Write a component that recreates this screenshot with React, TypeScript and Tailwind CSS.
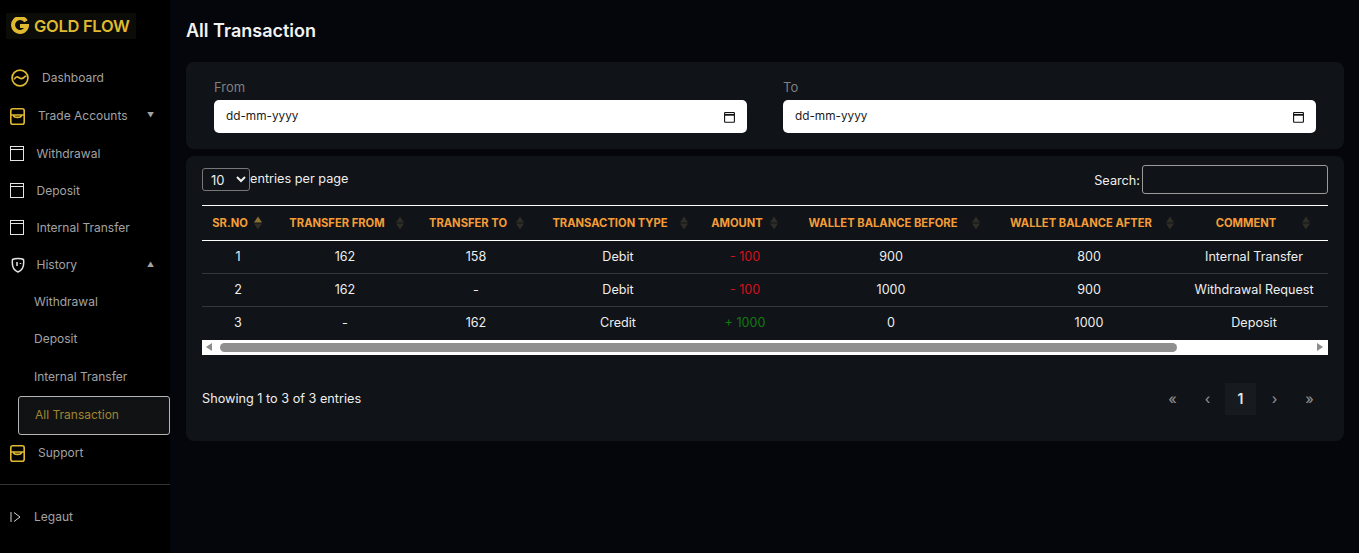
import { ReactNode } from "react";

const rows = [
  { sr: 1, from: "162", to: "158", type: "Debit", amount: "- 100", credit: false, before: "900", after: "800", comment: "Internal Transfer" },
  { sr: 2, from: "162", to: "-", type: "Debit", amount: "- 100", credit: false, before: "1000", after: "900", comment: "Withdrawal Request" },
  { sr: 3, from: "-", to: "162", type: "Credit", amount: "+ 1000", credit: true, before: "0", after: "1000", comment: "Deposit" },
];

const columns = [
  { label: "SR.NO", width: "w-[72px]", active: true },
  { label: "TRANSFER FROM", width: "w-[142px]" },
  { label: "TRANSFER TO", width: "w-[120px]" },
  { label: "TRANSACTION TYPE", width: "w-[164px]" },
  { label: "AMOUNT", width: "w-[90px]" },
  { label: "WALLET BALANCE BEFORE", width: "w-[202px]" },
  { label: "WALLET BALANCE AFTER", width: "w-[194px]" },
  { label: "COMMENT", width: "w-[136px]" },
];

function GoldBox() {
  return (
    <svg width="15" height="17" viewBox="0 0 15 17" fill="none" stroke="#dfba30" strokeWidth="1.6">
      <rect x="0.8" y="0.8" width="13.400" height="15.400" rx="2" />
      <path d="M0.8 7h13.400M3.500 7c0 3.200 8 3.200 8 0" />
    </svg>
  );
}

function PlainBox() {
  return (
    <svg width="14" height="15" viewBox="0 0 14 15" fill="none" stroke="#e5e5e5" strokeWidth="1">
      <rect x="0.5" y="0.5" width="13" height="14" />
      <path d="M0.5 3.500h13" />
    </svg>
  );
}

function SideItem({ icon, label, gap, arrow, height = "h-[37.400px]" }: { icon: ReactNode; label: string; gap: string; arrow?: string; height?: string }) {
  return (
    <div className={`flex items-center pl-[10px] pr-4 text-[12px] text-[#a3a3a3] ${height}`}>
      <span className="flex w-[16px] shrink-0 justify-start">{icon}</span>
      <span className={gap}>{label}</span>
      {arrow && <span className="ml-auto text-[7px] text-[#a3a3a3]">{arrow}</span>}
    </div>
  );
}

function Sidebar() {
  return (
    <aside className="flex w-[170px] shrink-0 flex-col bg-black">
      <div className="px-[6px] pt-[13px]">
        <div className="flex h-[26px] w-[130px] items-center gap-[5px] bg-[#0b0b08] pl-[5px] text-[16.500px] leading-[24px] font-semibold tracking-[-0.3px] text-[#dfba30]">
          <svg width="18" height="18" viewBox="0 0 18 18" fill="none">
            <path d="M15 4.200A7 7 0 1 0 16 9H9" stroke="#dfba30" strokeWidth="4" />
          </svg>
          GOLD FLOW
        </div>
      </div>
      <div className="mt-[20px] flex flex-col">
        <SideItem
          height="h-[38px]"
          gap="ml-[16px]"
          label="Dashboard"
          icon={
            <svg width="18" height="18" viewBox="0 0 20 20" fill="none" stroke="#dfba30" strokeWidth="1.900" className="ml-px shrink-0">
              <circle cx="10" cy="10" r="8.800" />
              <path d="M3.500 11.500c2-3.500 3.500-3 6-1.500s4.500.5 7-2.500" />
            </svg>
          }
        />
        <SideItem height="h-[38px]" gap="ml-[12px]" label="Trade Accounts" icon={<GoldBox />} arrow="▼" />
        <SideItem gap="ml-[10.500px]" label="Withdrawal" icon={<PlainBox />} />
        <SideItem height="h-[37px]" gap="ml-[10.500px]" label="Deposit" icon={<PlainBox />} />
        <SideItem height="h-[37px]" gap="ml-[10.500px]" label="Internal Transfer" icon={<PlainBox />} />
        <SideItem
          height="h-[37px]"
          gap="ml-[10.500px]"
          label="History"
          arrow="▲"
          icon={
            <svg width="14" height="16" viewBox="0 0 14 16" fill="none" stroke="#e5e5e5" strokeWidth="1.500" className="ml-px">
              <path d="M1.500 2.500C4 1 10 1 12.500 2.500 13.200 8 13 13 7 15 1 13 .8 8 1.500 2.500Z" />
              <path d="M6 5v4M9.500 6v1" />
            </svg>
          }
        />
        <div className="flex flex-col pl-[34px] text-[12px] text-[#a3a3a3]">
          <span className="flex h-[37.400px] items-center">Withdrawal</span>
          <span className="flex h-[37.400px] items-center">Deposit</span>
          <span className="flex h-[37.400px] items-center">Internal Transfer</span>
        </div>
        <div className="ml-[18px] flex h-[39px] w-[152px] items-center rounded-[3px] border border-[#b5b5b5] bg-[#111214] pl-4 text-[12px] text-[#a0852f]">
          All Transaction
        </div>
        <SideItem gap="ml-[12px]" label="Support" icon={<GoldBox />} />
      </div>
      <div className="mt-[12px] h-px bg-[#333]" />
      <div className="flex items-center gap-[13px] pl-[10px] pt-[23px] text-[12px] text-[#a3a3a3]">
        <svg width="11" height="12" viewBox="0 0 11 12" fill="none" stroke="#d4d4d4" strokeWidth="1">
          <path d="M1 1v10M4 1.500 10 6l-6 4.500" />
        </svg>
        Legaut
      </div>
    </aside>
  );
}

function DateField({ label }: { label: string }) {
  return (
    <div className="flex-1">
      <div className="mb-[3px] text-[13px] leading-[20px] text-[#808080]">{label}</div>
      <div className="flex h-[33px] items-center justify-between rounded-[5px] bg-white pl-3 pr-3 text-[11.800px] text-[#1a1a1a]">
        <span>dd-mm-yyyy</span>
        <svg width="11" height="12" viewBox="0 0 11 12" fill="none" stroke="#111" strokeWidth="1.100">
          <rect x="0.600" y="1.500" width="9.800" height="9.800" rx="0.500" />
          <path d="M0.600 3.800h9.800" strokeWidth="1.800" />
        </svg>
      </div>
    </div>
  );
}

function SortIcon({ active }: { active?: boolean }) {
  return (
    <span className="absolute right-[12px] top-1/2 flex -translate-y-1/2 flex-col gap-px">
      <span className={`h-0 w-0 border-x-[4px] border-b-[6px] border-x-transparent ${active ? "border-b-[#8c7232]" : "border-b-[#2e2e27]"}`} />
      <span className="h-0 w-0 border-x-[4px] border-t-[6px] border-x-transparent border-t-[#2e2e27]" />
    </span>
  );
}

function Scrollbar() {
  return (
    <div className="flex h-[15px] items-center border-y-[2px] border-white bg-white px-[4px]">
      <span className="h-0 w-0 border-y-[4.500px] border-r-[6px] border-y-transparent border-r-[#8c8c8c]" />
      <span className="ml-[8px] h-[9px] w-[957px] rounded-full bg-[#8f8f8f]" />
      <span className="ml-auto mr-[1px] h-0 w-0 border-y-[4.500px] border-l-[6px] border-y-transparent border-l-[#8c8c8c]" />
    </div>
  );
}

function Pagination() {
  return (
    <div className="flex items-center pr-[2px] text-[14px] font-medium text-[#8a8a8a]">
      <span className="flex h-[32px] w-[35px] items-center justify-center">«</span>
      <span className="flex h-[32px] w-[35px] items-center justify-center">‹</span>
      <span className="flex h-[32px] w-[31px] items-center justify-center bg-[#171a1f] font-semibold text-[#e5e5e5]">1</span>
      <span className="flex h-[32px] w-[37px] items-center justify-center">›</span>
      <span className="flex h-[32px] w-[33px] items-center justify-center">»</span>
    </div>
  );
}

export default function App() {
  return (
    <div className="flex h-[553px] overflow-hidden bg-[#04060b] font-['Inter',sans-serif]">
      <Sidebar />
      <main className="flex-1 pl-4 pr-[15px]">
        <h1 className="pt-[19px] text-[18px] leading-[24px] font-semibold text-[#f2f2f2]">All Transaction</h1>
        <section className="mt-[19px] flex h-[87px] gap-9 rounded-lg bg-[#101317] pl-7 pr-7 pt-[15px]">
          <DateField label="From" />
          <DateField label="To" />
        </section>
        <section className="mt-[7px] h-[285px] rounded-lg bg-[#101317] px-4 pt-[9px]">
          <div className="flex h-[29px] items-center justify-between text-[12.700px] text-[#eee]">
            <div className="flex items-center">
              <select className="h-[23px] w-[48px] rounded-[3px] border border-[#777] bg-transparent pl-[4px] text-[13px] text-[#eee]">
                <option className="text-black">10</option>
              </select>
              <span className="pb-[2px] leading-[24px]">entries per page</span>
            </div>
            <div className="flex items-center gap-[2px]">
              <span className="pt-[2px]">Search:</span>
              <input className="h-[29px] w-[186px] rounded-[3px] border border-[#9a9a9a] bg-transparent" />
            </div>
          </div>
          <div className="mt-[11px] overflow-hidden">
            <table className="w-full table-fixed border-collapse text-center text-[12.600px] text-[#eee]">
              <thead>
                <tr className="h-[35px] border-y border-white">
                  {columns.map((c) => (
                    <th key={c.label} className={`relative whitespace-nowrap pr-4 text-[11.200px] font-bold text-[#f49d37] ${c.width}`}>
                      {c.label}
                      <SortIcon active={c.active} />
                    </th>
                  ))}
                  <th />
                </tr>
              </thead>
              <tbody>
                {rows.map((r) => (
                  <tr key={r.sr} className="h-[33px] border-b border-[#33363c] last:border-b-0">
                    <td>{r.sr}</td>
                    <td>{r.from}</td>
                    <td>{r.to}</td>
                    <td>{r.type}</td>
                    <td className={r.credit ? "text-[#117a11]" : "text-[#d6101e]"}>{r.amount}</td>
                    <td>{r.before}</td>
                    <td>{r.after}</td>
                    <td className="whitespace-nowrap">{r.comment}</td>
                    <td />
                  </tr>
                ))}
              </tbody>
            </table>
          </div>
          <Scrollbar />
          <div className="mt-[28px] flex items-center justify-between text-[12.700px] text-[#eee]">
            <span>Showing 1 to 3 of 3 entries</span>
            <Pagination />
          </div>
        </section>
      </main>
    </div>
  );
}
